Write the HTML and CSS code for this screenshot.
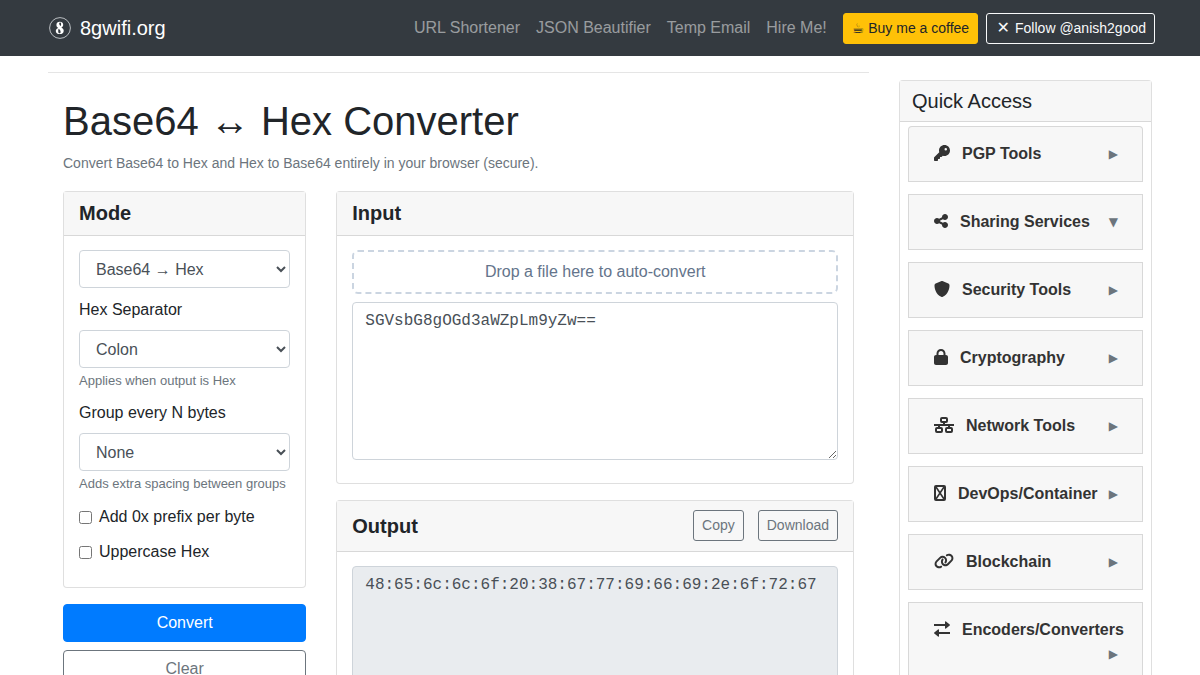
FILE: index.html
```html
<!DOCTYPE html>
<html lang="en">
<head>
    <meta charset="UTF-8">
    <meta name="viewport" content="width=device-width, initial-scale=1.0">
    <meta name="description" content="Convert Base64 to Hex and Hex to Base64">
    <title>Base64 to Hex Converter</title>
    <link rel="stylesheet" href="styles.css">
</head>
<body>
    <nav class="navbar">
        <div class="navbar-inner">
            <a class="brand" href="#">
                <svg class="logo" viewBox="0 0 30 30" aria-hidden="true">
                    <circle cx="15" cy="15" r="10.400" fill="none" stroke="#b9bdc1" stroke-width="1"/>
                    <path fill="#fff" fill-rule="evenodd" d="M14.800 8.800c2 0 3.400 1.100 3.400 2.900 0 1.300-.7 2.200-1.800 2.700 1.500.8 2.300 1.900 2.300 3.300 0 2.100-1.500 3.400-4 3.400s-3.900-1.200-3.900-3.100c0-1.500.9-2.500 2.400-3.100-1.200-.8-1.800-1.800-1.800-3 0-1.900 1.400-3.100 3.400-3.100zM15.100 9.500c-.6 0-.9.400-.9 1 0 1 .5 1.800 1.400 2.600.4-.5.500-1.100.5-1.900 0-1.100-.3-1.700-1-1.700zM13.700 15.700c-.4.600-.5 1.300-.5 2.200 0 1.400.4 2.400 1.300 2.400.7 0 1.100-.5 1.100-1.400 0-1.200-.6-2.100-1.900-3.200z"/>
                </svg>
                8gwifi.org
            </a>
            <div class="nav-links">
                <a class="nav-link" href="#">URL Shortener</a>
                <a class="nav-link" href="#">JSON Beautifier</a>
                <a class="nav-link" href="#">Temp Email</a>
                <a class="nav-link" href="#">Hire Me!</a>
                <a class="btn btn-sm btn-warning" href="#"><span class="symbol">☕</span> Buy me a coffee</a>
                <a class="btn btn-sm btn-light" href="#"><span class="symbol symbol-x">✕</span> Follow @anish2good</a>
            </div>
        </div>
    </nav>

    <div class="page">
        <main class="content">
            <hr>
            <div class="tool">
                <h1>Base64 ↔ Hex Converter</h1>
                <p class="lead">Convert Base64 to Hex and Hex to Base64 entirely in your browser (secure).</p>
                <div class="tool-grid">
                    <div class="options">
                        <section class="card">
                            <h2 class="card-header">Mode</h2>
                            <div class="card-body">
                                <div class="form-group">
                                    <select class="form-control" id="mode" aria-label="Mode">
                                        <option>Base64 → Hex</option>
                                        <option>Hex → Base64</option>
                                    </select>
                                </div>
                                <div class="form-group">
                                    <label class="label" for="separator">Hex Separator</label>
                                    <select class="form-control" id="separator">
                                        <option>Colon</option>
                                        <option>Space</option>
                                        <option>None</option>
                                    </select>
                                    <small class="help">Applies when output is Hex</small>
                                </div>
                                <div class="form-group">
                                    <label class="label" for="group">Group every N bytes</label>
                                    <select class="form-control" id="group">
                                        <option>None</option>
                                        <option>4</option>
                                        <option>8</option>
                                    </select>
                                    <small class="help">Adds extra spacing between groups</small>
                                </div>
                                <div class="form-group check">
                                    <input type="checkbox" id="prefix">
                                    <label for="prefix">Add 0x prefix per byte</label>
                                </div>
                                <div class="form-group check">
                                    <input type="checkbox" id="uppercase">
                                    <label for="uppercase">Uppercase Hex</label>
                                </div>
                            </div>
                        </section>
                        <div class="actions">
                            <button type="button" class="btn btn-primary">Convert</button>
                            <button type="button" class="btn btn-outline">Clear</button>
                        </div>
                    </div>
                    <div class="panels">
                        <section class="card">
                            <h2 class="card-header">Input</h2>
                            <div class="card-body">
                                <div class="dropzone">Drop a file here to auto-convert</div>
                                <div class="form-group">
                                    <textarea class="form-control mono" rows="6" aria-label="Input" spellcheck="false">SGVsbG8gOGd3aWZpLm9yZw==</textarea>
                                </div>
                            </div>
                        </section>
                        <section class="card">
                            <div class="card-header">
                                <h2>Output</h2>
                                <div class="header-buttons">
                                    <button type="button" class="btn btn-sm btn-outline">Copy</button>
                                    <button type="button" class="btn btn-sm btn-outline">Download</button>
                                </div>
                            </div>
                            <div class="card-body">
                                <textarea class="form-control mono" rows="6" aria-label="Output" readonly>48:65:6c:6c:6f:20:38:67:77:69:66:69:2e:6f:72:67</textarea>
                            </div>
                        </section>
                    </div>
                </div>
            </div>
        </main>

        <aside class="sidebar card">
            <h2 class="sidebar-title">Quick Access</h2>
            <div class="menu">
                <button type="button" class="menu-item">
                    <span class="menu-name">
                        <svg width="16" height="16" viewBox="0 0 512 512"><path d="M336 352c97.200 0 176-78.800 176-176S433.200 0 336 0S160 78.800 160 176c0 18.700 2.900 36.800 8.300 53.700L7 391c-4.500 4.500-7 10.600-7 17v80c0 13.300 10.700 24 24 24h80c13.300 0 24-10.700 24-24V448h40c13.300 0 24-10.700 24-24V384h40c6.400 0 12.500-2.500 17-7l33.300-33.300c16.900 5.400 35 8.300 53.700 8.300zM376 96a40 40 0 1 1 0 80 40 40 0 1 1 0-80z"/></svg>
                        PGP Tools
                    </span>
                    <span class="arrow">▶</span>
                </button>
                <button type="button" class="menu-item">
                    <span class="menu-name">
                        <svg width="14" height="16" viewBox="0 0 448 512"><path d="M352 224c53 0 96-43 96-96s-43-96-96-96s-96 43-96 96c0 4 .2 8 .7 11.900l-94.100 47C145.400 170.200 121.900 160 96 160c-53 0-96 43-96 96s43 96 96 96c25.900 0 49.400-10.200 66.600-26.900l94.100 47c-.5 3.900-.7 7.800-.7 11.900c0 53 43 96 96 96s96-43 96-96s-43-96-96-96c-25.900 0-49.400 10.200-66.600 26.900l-94.100-47c.5-3.900 .7-7.800 .7-11.900s-.2-8-.7-11.900l94.100-47C302.600 213.800 326.100 224 352 224z"/></svg>
                        Sharing Services
                    </span>
                    <span class="arrow">▼</span>
                </button>
                <button type="button" class="menu-item">
                    <span class="menu-name">
                        <svg width="16" height="16" viewBox="0 0 512 512"><path d="M256 0c4.600 0 9.200 1 13.400 2.900L457.700 82.800c22 9.300 38.400 31 38.300 57.200c-.5 99.200-41.300 280.700-213.600 363.200c-16.700 8-36.100 8-52.800 0C57.300 420.700 16.500 239.200 16 140c-.1-26.200 16.300-47.900 38.300-57.200L242.700 2.900C246.800 1 251.400 0 256 0z"/></svg>
                        Security Tools
                    </span>
                    <span class="arrow">▶</span>
                </button>
                <button type="button" class="menu-item">
                    <span class="menu-name">
                        <svg width="14" height="16" viewBox="0 0 448 512"><path d="M144 144v48H304V144c0-44.200-35.800-80-80-80s-80 35.800-80 80zM80 192V144C80 64.500 144.500 0 224 0s144 64.500 144 144v48h16c35.300 0 64 28.700 64 64V448c0 35.300-28.700 64-64 64H64c-35.300 0-64-28.700-64-64V256c0-35.300 28.700-64 64-64H80z"/></svg>
                        Cryptography
                    </span>
                    <span class="arrow">▶</span>
                </button>
                <button type="button" class="menu-item">
                    <span class="menu-name">
                        <svg width="20" height="16" viewBox="0 0 20 16"><g fill="none" stroke="#333" stroke-width="2"><rect x="7" y="1" width="6" height="4" rx="1"/><rect x="2" y="11" width="6" height="4" rx="1"/><rect x="12" y="11" width="6" height="4" rx="1"/><path d="M0 8h20M10 5v3M5 8v3M15 8v3"/></g></svg>
                        Network Tools
                    </span>
                    <span class="arrow">▶</span>
                </button>
                <button type="button" class="menu-item">
                    <span class="menu-name">
                        <svg width="12" height="16" viewBox="0 0 12 16"><rect x="1" y="1" width="10" height="14" rx="1" fill="none" stroke="#333" stroke-width="2"/><path d="M2 2l8 12M10 2L2 14" fill="none" stroke="#333" stroke-width="1.600"/></svg>
                        DevOps/Container
                    </span>
                    <span class="arrow">▶</span>
                </button>
                <button type="button" class="menu-item">
                    <span class="menu-name">
                        <svg width="20" height="16" viewBox="0 0 640 512"><path d="M579.800 267.700c56.500-56.500 56.500-148 0-204.500c-50-50-128.800-56.500-186.300-15.400l-1.600 1.100c-14.400 10.300-17.700 30.300-7.400 44.600s30.300 17.700 44.600 7.400l1.600-1.100c32.100-22.900 76-19.300 103.800 8.600c31.500 31.500 31.500 82.500 0 114L422.300 334.800c-31.500 31.500-82.500 31.500-114 0c-27.900-27.900-31.500-71.800-8.600-103.800l1.100-1.600c10.300-14.400 6.900-34.400-7.400-44.600s-34.400-6.900-44.600 7.400l-1.100 1.600C206.500 251.200 213 330 263 380c56.500 56.500 148 56.500 204.500 0L579.800 267.700zM60.200 244.300c-56.500 56.500-56.500 148 0 204.500c50 50 128.800 56.500 186.300 15.400l1.600-1.100c14.400-10.300 17.700-30.300 7.400-44.600s-30.300-17.700-44.600-7.400l-1.600 1.100c-32.100 22.900-76 19.300-103.800-8.600C74 372 74 321 105.500 289.500L217.700 177.200c31.500-31.500 82.500-31.500 114 0c27.900 27.900 31.500 71.800 8.600 103.900l-1.100 1.600c-10.300 14.400-6.900 34.400 7.400 44.600s34.400 6.900 44.600-7.400l1.100-1.600C433.500 260.800 427 182 377 132c-56.500-56.500-148-56.500-204.500 0L60.200 244.300z"/></svg>
                        Blockchain
                    </span>
                    <span class="arrow">▶</span>
                </button>
                <button type="button" class="menu-item">
                    <span class="menu-name">
                        <svg width="16" height="16" viewBox="0 0 16 16"><path d="M0 3h11V1q0-1.200 1-.6l3.700 3q.6.600 0 1.200l-3.700 3q-1 .6-1-.6V5H0zM16 11H5V9q0-1.200-1-.6l-3.700 3q-.6.600 0 1.200l3.700 3q1 .6 1-.6v-2h11z"/></svg>
                        Encoders/Converters
                    </span>
                    <span class="arrow">▶</span>
                </button>
            </div>
        </aside>
    </div>
</body>
</html>
```
FILE: styles.css
```css
*{
    box-sizing: border-box;
}
body{
    margin: 0;
    background: #fff;
    color: #212529;
    font-family: "Liberation Sans", Arial, sans-serif;
    font-size: 16px;
    line-height: 24px;
}
a{
    text-decoration: none;
}
h1, h2, p{
    margin: 0;
}

/* top bar */
.navbar{
    background: #343a40;
    padding: 8px 0;
}
.navbar-inner{
    max-width: 1140px;
    min-height: 40px;
    margin: 0 auto;
    padding: 0 15px;
    display: flex;
    align-items: center;
    justify-content: space-between;
}
.brand{
    display: flex;
    align-items: center;
    gap: 5px;
    color: #fff;
    font-size: 20px;
}
.logo{
    width: 30px;
    height: 30px;
}
.nav-links{
    display: flex;
    align-items: center;
    gap: 8px;
}
.nav-link{
    color: rgba(255,255,255,.5);
    margin-right: 8px;
}
.symbol{
    font-family: "DejaVu Sans", sans-serif;
    line-height: 1;
}
.symbol-x{
    display: inline-block;
    width: 16px;
    font-size: 16px;
    text-align: center;
}

/* buttons */
.btn{
    display: block;
    padding: 6px 12px;
    border: 1px solid transparent;
    border-radius: 4px;
    background: transparent;
    font-family: inherit;
    font-size: 16px;
    line-height: 24px;
    text-align: center;
}
.btn-sm{
    padding: 4px 8px;
    font-size: 14px;
    line-height: 21px;
    border-radius: 3px;
}
.btn-primary{
    background: #007bff;
    border-color: #007bff;
    color: #fff;
}
.btn-warning{
    background: #ffc107;
    border-color: #ffc107;
    color: #212529;
}
.btn-light{
    border-color: #f8f9fa;
    color: #f8f9fa;
}
.btn-outline{
    border-color: #6c757d;
    color: #6c757d;
}

/* page columns */
.page{
    display: grid;
    grid-template-columns: minmax(0, 821fr) minmax(0, 253fr);
    gap: 30px;
    align-items: start;
    padding: 0 48px 48px;
}
hr{
    margin: 16px 0;
    border: 0;
    border-top: 1px solid rgba(0,0,0,.1);
}
.tool{
    padding: 8px 15px 0;
}
h1{
    font-size: 40px;
    font-weight: normal;
    line-height: 48px;
}
.lead{
    margin: 8px 0 18px;
    color: #6c757d;
    font-size: 14px;
    line-height: 20px;
}
.tool-grid{
    display: grid;
    grid-template-columns: minmax(0, 243fr) minmax(0, 517fr);
    gap: 30px;
    align-items: start;
}
.panels{
    display: grid;
    gap: 16px;
}

/* cards */
.card{
    border: 1px solid rgba(0,0,0,.125);
    border-radius: 4px;
    background: #fff;
}
.card-header{
    display: flex;
    align-items: center;
    justify-content: space-between;
    padding: 9px 15px 10px;
    border-bottom: 1px solid rgba(0,0,0,.125);
    background: #f7f7f7;
}
.card-header, .card-header h2{
    font-size: 20px;
    font-weight: bold;
    line-height: 24px;
}
.card-body{
    padding: 14px 15px 13px;
}
.header-buttons{
    display: flex;
    gap: 14px;
}

/* form */
.form-group{
    margin-bottom: 10px;
}
.label{
    display: block;
    margin-bottom: 8px;
}
.form-control{
    display: block;
    width: 100%;
    padding: 6px 12px;
    border: 1px solid #ced4da;
    border-radius: 4px;
    background: #fff;
    color: #495057;
    font-family: inherit;
    font-size: 16px;
    line-height: 24px;
}
select.form-control{
    height: 38px;
}
.mono{
    font-family: "Liberation Mono", monospace;
    resize: vertical;
}
.mono:read-only{
    background: #e9ecef;
}
.help{
    display: block;
    padding: 3px 0 1px;
    color: #6c757d;
    font-size: 13px;
    line-height: 19px;
}
.check{
    display: flex;
    align-items: center;
    gap: 7px;
    padding-top: 1px;
}
.check input{
    margin: 0;
}
.actions{
    display: grid;
    gap: 8px;
    margin-top: 16px;
}
.dropzone{
    margin-bottom: 8px;
    padding: 8px;
    border: 2px dashed #cbd5e1;
    border-radius: 6px;
    color: #64748b;
    text-align: center;
}

/* quick access */
.sidebar{
    margin-top: 24px;
}
.sidebar-title{
    padding: 8px 12px;
    border-bottom: 1px solid rgba(0,0,0,.125);
    background: #f7f7f7;
    font-size: 20px;
    font-weight: normal;
}
.menu{
    display: grid;
    grid-template-columns: minmax(0, 1fr);
    gap: 12px;
    padding: 4px 8px;
}
.menu-item{
    display: flex;
    flex-wrap: wrap;
    align-items: center;
    padding: 15px 24px 15px 25px;
    border: 1px solid rgba(0,0,0,.125);
    background: #f7f7f7;
    color: #333;
    font-family: inherit;
    font-size: 16px;
    font-weight: bold;
    line-height: 24px;
    text-align: left;
}
.menu-item:first-child{
    border-radius: 4px 4px 0 0;
}
.menu-name{
    display: flex;
    align-items: center;
    gap: 12px;
    white-space: nowrap;
}
.menu-name svg{
    margin-bottom: 2px;
    fill: #333;
}
.arrow{
    margin-left: auto;
    color: #6c757d;
    font-family: "DejaVu Sans", sans-serif;
    font-size: 12px;
    font-weight: normal;
}
```
